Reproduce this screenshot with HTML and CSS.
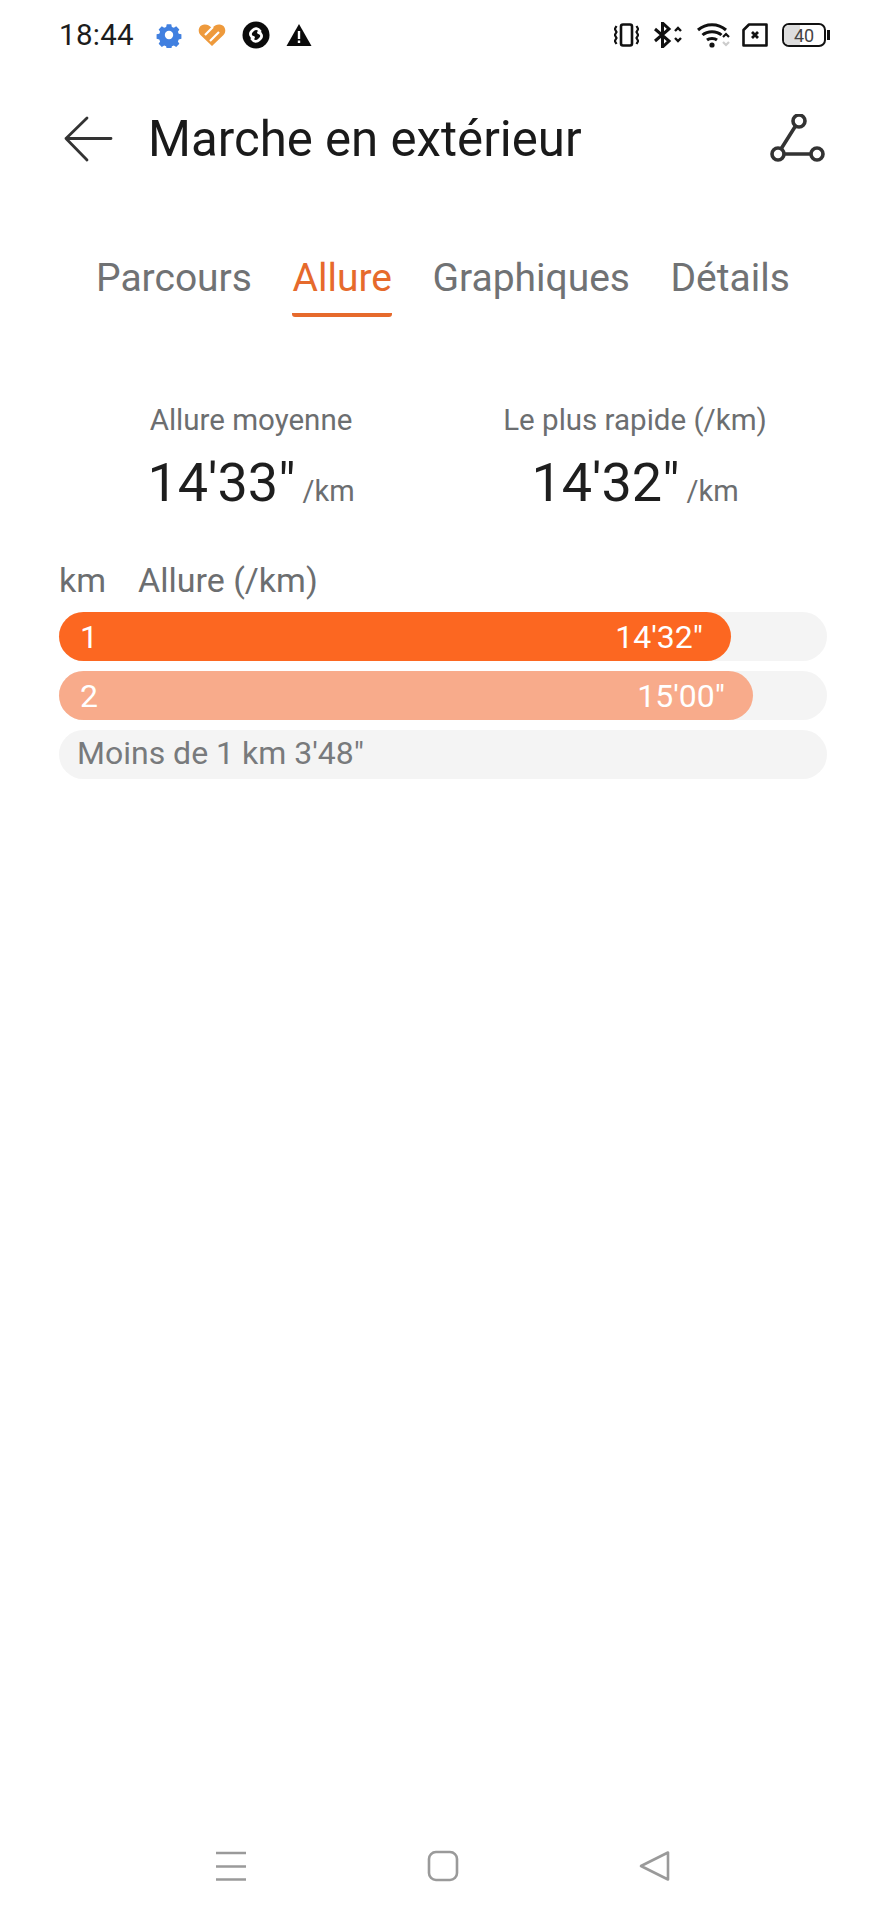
FILE: index.html
```html
<!DOCTYPE html>
<html lang="fr">
<head>
<meta charset="utf-8">
<title>Marche en extérieur</title>
<link rel="stylesheet" href="styles.css">
</head>
<body>
<div class="page">
  <div class="status">
    <span class="time">18:44</span>
    <div class="status-left">
      <svg width="26" height="26" viewBox="0 0 26 26"><path fill="#4180e0" d="M10.500 1h5l.7 3 2.200.9 2.600-1.600 3.500 3.500-1.600 2.600.9 2.200 3 .7v5l-3 .7-.9 2.200 1.600 2.600-3.500 3.500-2.600-1.600-2.200.9-.7 3h-5l-.7-3-2.200-.9-2.600 1.600-3.500-3.500 1.600-2.600-.9-2.200-3-.7v-5l3-.7.9-2.200-1.600-2.600 3.500-3.500 2.600 1.600 2.200-.9z" transform="translate(1.300 1.300) scale(.9)"/><circle cx="13" cy="13" r="4.200" fill="#fff"/></svg>
      <svg width="28" height="24" viewBox="0 0 28 24"><path fill="#ee9a3c" d="M14 23L2.500 12C-.5 9 0 2 6.500 1.500 9.500 1.300 12 3 14 5c2-2 4.500-3.700 7.500-3.500C28 2 28.500 9 25.500 12z"/><path fill="none" stroke="#fff" stroke-width="2.200" d="M7 12l8-8M12 18l9-9"/></svg>
      <svg width="28" height="28" viewBox="0 0 28 28"><circle cx="14" cy="14" r="13.500" fill="#0b0b0b"/><path fill="none" stroke="#fff" stroke-width="2.800" stroke-linecap="round" stroke-linejoin="round" d="M18 10C16 7 13 7 11 9l-1.500 1.500c-2 2-1 5.500 2 6M10 18c2 3 5 3 7 1l1.500-1.500c2-2 1-5.500-2-6"/></svg>
      <svg width="26" height="24" viewBox="0 0 26 24"><path fill="#0b0b0b" d="M13 1l12.500 22H.5z"/><path fill="#fff" d="M11.800 8h2.400v8h-2.400zM11.800 17.500h2.400V20h-2.400z"/></svg>
    </div>
    <div class="status-right">
      <svg width="25" height="24" viewBox="0 0 25 24" fill="none" stroke="#111" stroke-width="2.200"><rect x="7" y="1.500" width="11" height="21" rx="2" stroke-width="2.600"/><path d="M2.500 3L.8 6l1.700 3L.8 12l1.700 3-1.700 3 1.700 3M22.500 3l1.700 3-1.700 3 1.700 3-1.700 3 1.700 3-1.700 3"/></svg>
      <svg class="gap-wide" width="28" height="26" viewBox="0 0 28 26" fill="none" stroke="#111" stroke-width="3"><path d="M1 7l14 12-6.500 6V1L15 7 1 19"/><path stroke-width="2.400" d="M21 9l3-3 3 3M21 16l3 3 3-3"/></svg>
      <svg class="gap-wide" width="33" height="26" viewBox="0 0 33 26" fill="none" stroke="#111" stroke-width="3"><path d="M1 8c8-7 20-7 28 0M5.500 13c5-4.500 14-4.500 19 0M10 18c2.500-2 7.500-2 10 0"/><circle cx="15" cy="23" r="2.600" fill="#111" stroke="none"/><path stroke-width="2.200" d="M26 15l3-3 3 3"/><path stroke="#ccc" stroke-width="2.200" d="M26 20l3 3 3-3"/></svg>
      <svg class="gap-narrow" width="26" height="24" viewBox="0 0 26 24" fill="none" stroke="#111" stroke-width="2.600"><path d="M7 1.500h17.500v21h-23V7z" stroke-linejoin="round"/><path stroke-width="2.800" d="M10 9l6 6M16 9l-6 6"/></svg>
      <div class="battery"><div class="battery-body"><div class="battery-level"></div><span class="battery-text">40</span></div><div class="battery-cap"></div></div>
    </div>
  </div>

  <header class="header">
    <svg class="back" width="50" height="46" viewBox="0 0 50 46" fill="none" stroke="#333" stroke-width="2.800" stroke-linecap="round" stroke-linejoin="round"><path d="M24 2L3 22.500 24 44M3 22.500h45"/></svg>
    <h1 class="title">Marche en extérieur</h1>
    <svg class="route" width="56" height="50" viewBox="0 0 56 50" fill="none" stroke="#333" stroke-width="3.600"><circle cx="29" cy="7" r="6"/><circle cx="8" cy="40" r="6"/><circle cx="47" cy="40" r="6"/><path d="M25.500 12L11 35M14 40h27"/></svg>
  </header>

  <nav class="tabs">
    <span class="tab">Parcours</span>
    <span class="tab active">Allure</span>
    <span class="tab">Graphiques</span>
    <span class="tab">Détails</span>
  </nav>

  <section class="summary">
    <div class="stat stat-a">
      <div class="stat-label">Allure moyenne</div>
      <div class="stat-value">14'33"<span class="unit">/km</span></div>
    </div>
    <div class="stat stat-b">
      <div class="stat-label">Le plus rapide (/km)</div>
      <div class="stat-value">14'32"<span class="unit">/km</span></div>
    </div>
  </section>

  <div class="list-head"><span>km</span><span>Allure (/km)</span></div>
  <div class="bars">
    <div class="track"><div class="fill fill-1" style="width:672px"><span>1</span><span>14'32"</span></div></div>
    <div class="track"><div class="fill fill-2" style="width:694px"><span>2</span><span>15'00"</span></div></div>
    <div class="track track-text">Moins de 1 km 3'48"</div>
  </div>

  <div class="navbar">
    <svg width="32" height="30" viewBox="0 0 32 30" stroke="#9a9a9a" stroke-width="2.400"><path d="M1 2h30M1 15.500h30M1 28.500h30"/></svg>
    <svg width="32" height="32" viewBox="0 0 32 32" fill="none" stroke="#9a9a9a" stroke-width="2.600"><rect x="2" y="2" width="28" height="28" rx="7"/></svg>
    <svg width="32" height="32" viewBox="0 0 32 32" fill="none" stroke="#9a9a9a" stroke-width="2.600" stroke-linejoin="round"><path d="M29 2.500v27L2 16z"/></svg>
  </div>
</div>
</body>
</html>
```
FILE: styles.css
```css
* { box-sizing: border-box; }
html, body { margin: 0; padding: 0; background: #fff; }
body { font-family: Roboto, "Liberation Sans", sans-serif; }
.page {
  width: 886px;
  height: 1920px;
  display: flex;
  flex-direction: column;
  padding: 0 59px;
  overflow: hidden;
}
.status {
  height: 70px;
  display: flex;
  align-items: center;
  flex: none;
}
.time { font-size: 29.500px; color: #1c1c1c; width: 97px; letter-spacing: .3px; }
.status-left { display: flex; align-items: center; gap: 16px; }
.status-right { display: flex; align-items: center; gap: 14px; margin-left: auto; margin-right: -3px; }
.gap-wide { margin-left: 1px; }
.gap-narrow { margin-left: -2px; }
.battery { display: flex; align-items: center; }
.battery-body {
  width: 44px; height: 24px;
  border: 2.500px solid #111;
  border-radius: 7px;
  position: relative;
  display: flex; align-items: center; justify-content: center;
  overflow: hidden;
}
.battery-level { position: absolute; left: 0; top: 0; bottom: 0; width: 40%; background: #ddd; }
.battery-text { position: relative; font-size: 18px; color: #444; }
.battery-cap { width: 3px; height: 10px; background: #111; margin-left: 1px; }

.header {
  display: flex;
  align-items: center;
  height: 78px;
  margin-top: 30px;
  flex: none;
}
.back { margin-left: 4px; flex: none; }
.title { font-size: 49.200px; font-weight: 400; margin: 0 0 0 35px; color: #1a1a1a; white-space: nowrap; }
.route { margin-left: auto; margin-right: 1px; flex: none; }

.tabs {
  display: flex;
  height: 73px;
  margin-top: 66px;
  padding-left: 37px;
  gap: 40.500px;
  flex: none;
}
.tab { font-size: 39px; color: #707274; line-height: 69px; height: 73px; white-space: nowrap; }
.tab.active { color: #e66a2c; border-bottom: 4px solid #e66a2c; border-radius: 0 0 3px 3px; }

.summary { display: flex; margin-top: 86px; height: 124px; flex: none; }
.stat { text-align: center; }
.stat-a { width: 384px; }
.stat-b { width: 384px; }
.stat-label { font-size: 29.500px; color: #6c6e70; line-height: 34px; }
.stat-value { font-size: 54px; color: #1e1e1e; line-height: 66px; margin-top: 13px; }
.unit { font-size: 29px; color: #6c6e70; margin-left: 7px; }

.list-head {
  display: flex;
  gap: 32px;
  font-size: 34px;
  color: #6c6e70;
  line-height: 40px;
  margin-top: 33px;
  flex: none;
}
.bars { display: flex; flex-direction: column; gap: 10px; margin-top: 12px; flex: none; }
.track { height: 49px; border-radius: 25px; background: #f4f4f4; width: 768px; }
.track-text { font-size: 32px; color: #787a7c; line-height: 47px; padding-left: 18px; }
.fill {
  height: 100%;
  border-radius: 25px;
  display: flex;
  justify-content: space-between;
  align-items: center;
  color: #fff;
  font-size: 32px;
  padding: 0 28px 0 21px;
}
.fill-1 { background: #fc6721; }
.fill-2 { background: #f8ab8b; }

.navbar {
  margin-top: auto;
  margin-bottom: 38px;
  display: flex;
  align-items: center;
  gap: 180px;
  padding-left: 156px;
  flex: none;
}
```
